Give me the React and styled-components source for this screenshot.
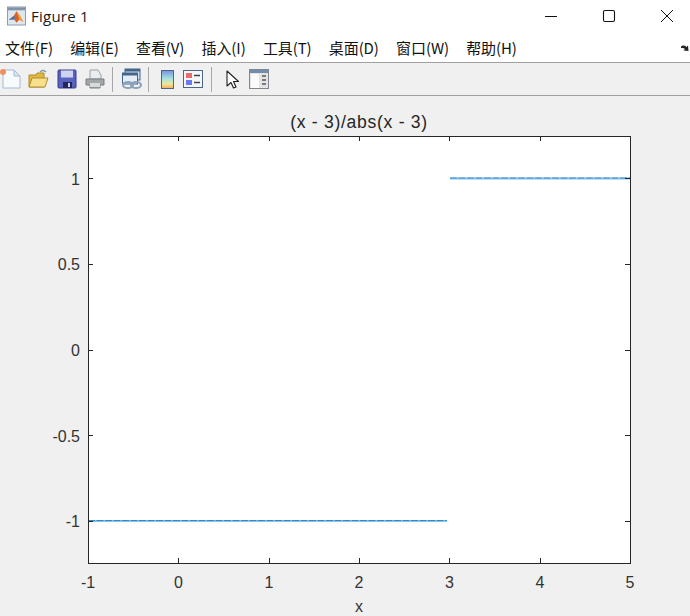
import React from "react"
import styled, { createGlobalStyle } from "styled-components"

const Global = createGlobalStyle`
  html, body { margin: 0; padding: 0; background: #f0f0f0; }
  body { font-family: "Open Sans", "Noto Sans CJK SC", sans-serif; }
`
const Win = styled.div`
  width: 690px;
  height: 616px;
  display: flex;
  flex-direction: column;
  overflow: hidden;
  background: #f0f0f0;
`
const TitleBar = styled.div`
  height: 32px;
  background: #fff;
  display: flex;
  align-items: center;
  padding-left: 7px;
  flex: none;
`
const TitleText = styled.span`
  font-size: 15px;
  color: #1a1a1a;
  margin-left: 5px;
  letter-spacing: 0.25px;
  flex: 1;
`
const WinBtns = styled.div`
  display: flex;
  align-items: center;
  gap: 44px;
  padding-right: 16px;
`
const MenuBar = styled.div`
  height: 30px;
  background: #fff;
  border-bottom: 1px solid #a0a0a0;
  display: flex;
  align-items: center;
  padding-left: 5px;
  gap: 17.3px;
  position: relative;
  flex: none;
`
const MenuItem = styled.span`
  font-family: "Noto Sans CJK SC", "Open Sans", sans-serif;
  font-size: 15px;
  color: #111;
  letter-spacing: -0.1px;
`
const Overflow = styled.svg`
  position: absolute;
  right: 0;
  top: 12px;
`
const ToolBar = styled.div`
  height: 32px;
  background: #f0f0f0;
  border-bottom: 1px solid #a0a0a0;
  display: flex;
  align-items: center;
  flex: none;
`
const Tool = styled.svg`
  width: 22px;
  height: 22px;
  margin-left: ${(p) => p.$ml ?? 6}px;
  flex: none;
`
const Sep = styled.div`
  width: 1px;
  height: 25px;
  background: #a8a8a8;
  margin-left: ${(p) => p.$ml ?? 6}px;
  flex: none;
`
const Figure = styled.div`
  flex: 1;
  background: #f0f0f0;
`
const Chart = styled.svg`
  display: block;
  width: 690px;
  height: 520px;
`
const Tick = styled.text`
  font-family: "Liberation Sans", Arial, sans-serif;
  font-size: 16px;
  fill: #333;
`
const PlotTitle = styled(Tick)`
  font-size: 17.6px;
  letter-spacing: 0.7px;
  fill: #262626;
`

const L = 88, R = 630, T = 40, B = 467
const xs = [
  ["-1", 88], ["0", 178.5], ["1", 269], ["2", 359], ["3", 449.5], ["4", 540], ["5", 630],
]
const ys = [
  ["1", 82.5], ["0.5", 168], ["0", 254], ["-0.5", 339.5], ["-1", 425],
]
const menus = ["文件(F)", "编辑(E)", "查看(V)", "插入(I)", "工具(T)", "桌面(D)", "窗口(W)", "帮助(H)"]

function PlotLine({ x1, x2, y }) {
  return (
    <>
      <line x1={x1} x2={x2} y1={y} y2={y} stroke="#8ac3ea" strokeWidth="2" />
      <line x1={x1} x2={x2} y1={y - 0.5} y2={y - 0.5} stroke="#2f8ccb" strokeWidth="1" strokeDasharray="7 1.5" />
    </>
  )
}

export default function App() {
  return (
    <Win>
      <Global />
      <TitleBar>
        <svg width="19" height="20" viewBox="0 0 20 20">
          <rect x="0.5" y="0.5" width="19" height="19" fill="#dfe6ee" stroke="#8b98a8" />
          <rect x="1" y="1" width="18" height="3" fill="#7f93aa" />
          <path d="M2 14 L7 10 L10 5 L13 9 L17 16 L13 14 L10 17 L7 13 Z" fill="#d9622b" />
          <path d="M2 14 L7 10 L9 12 L7 14 Z" fill="#3b78b5" />
          <path d="M10 5 L13 9 L17 16 L13 14 Z" fill="#f0a02c" />
        </svg>
        <TitleText>Figure 1</TitleText>
        <WinBtns>
          <svg width="14" height="14" viewBox="0 0 14 14"><path d="M1 7.5H13" stroke="#111" strokeWidth="1" /></svg>
          <svg width="14" height="14" viewBox="0 0 14 14"><rect x="1.5" y="1.5" width="11" height="11" rx="1.5" fill="none" stroke="#111" strokeWidth="1.1" /></svg>
          <svg width="14" height="14" viewBox="0 0 14 14"><path d="M1 1L13 13M13 1L1 13" stroke="#111" strokeWidth="1" /></svg>
        </WinBtns>
      </TitleBar>
      <MenuBar>
        {menus.map((m) => <MenuItem key={m}>{m}</MenuItem>)}
        <Overflow width="9" height="9" viewBox="0 0 9 9">
          <path d="M0 2.5 Q3 0.5 5.5 3 L7 1.5 L7.5 7 L2.5 6.5 L4 5 Q2.5 3.5 0 4Z" fill="#222" />
        </Overflow>
      </MenuBar>
      <ToolBar>
        <Tool $ml={0} viewBox="0 0 22 22">
          <path d="M3 2H14L20 8V20H3Z" fill="#f8fbfe" stroke="#a4bad2" />
          <path d="M14 2V8H20Z" fill="#d8e6f3" stroke="#a4bad2" />
          <circle cx="3" cy="4" r="3" fill="#f0905a" />
        </Tool>
        <Tool $ml={5} viewBox="0 0 22 22">
          <path d="M2 7H9L10 5H17V19H2Z" fill="#e2b93f" stroke="#b08c2e" />
          <path d="M2 19L5 10H21L18 19Z" fill="#f7e08c" stroke="#b08c2e" />
          <path d="M13 4Q16 1 19 4" fill="none" stroke="#7d97b0" strokeWidth="1.5" />
        </Tool>
        <Tool $ml={7} viewBox="0 0 22 22">
          <rect x="2" y="2" width="18" height="18" rx="1" fill="#5a62c0" stroke="#353a8c" />
          <rect x="5" y="2.5" width="12" height="7" fill="#cfd3f2" />
          <rect x="7" y="14" width="9" height="6" fill="#23265a" />
          <rect x="12" y="15" width="2" height="4" fill="#cfd3f2" />
        </Tool>
        <Tool $ml={6} viewBox="0 0 22 22">
          <path d="M6 2H14L17 7V11H6Z" fill="#e8edf2" stroke="#9a9fa5" />
          <path d="M2 11H20V17H16V20H6V17H2Z" fill="#a3a6a7" stroke="#7b7e80" />
          <rect x="6" y="15" width="10" height="4" fill="#d7d9da" />
        </Tool>
        <Sep $ml={6} />
        <Tool $ml={8} viewBox="0 0 22 22">
          <rect x="4" y="1" width="15" height="11" fill="#cfe0f0" stroke="#44648a" />
          <rect x="4" y="1" width="15" height="2.5" fill="#44648a" />
          <rect x="1.5" y="5" width="15" height="11" fill="#e5eef7" stroke="#44648a" />
          <rect x="1.5" y="5" width="15" height="2.5" fill="#44648a" />
          <ellipse cx="7" cy="17" rx="5" ry="3" fill="none" stroke="#8aa1b9" strokeWidth="2" />
          <ellipse cx="15" cy="17" rx="5" ry="3" fill="none" stroke="#8aa1b9" strokeWidth="2" />
        </Tool>
        <Sep $ml={5} />
        <Tool $ml={8} viewBox="0 0 22 22">
          <defs>
            <linearGradient id="cb" x1="0" y1="0" x2="0" y2="1">
              <stop offset="0" stopColor="#7b8fe0" />
              <stop offset="0.45" stopColor="#a6e2e2" />
              <stop offset="0.75" stopColor="#ece99a" />
              <stop offset="1" stopColor="#f2a65e" />
            </linearGradient>
          </defs>
          <rect x="4.5" y="2.5" width="12" height="18" fill="url(#cb)" stroke="#4a6689" />
        </Tool>
        <Tool $ml={3} viewBox="0 0 22 22">
          <rect x="1.5" y="2.5" width="19" height="17" fill="#f4f6f9" stroke="#4a6689" />
          <rect x="4" y="5" width="6" height="5" fill="#ee6b6b" />
          <rect x="4" y="12" width="6" height="5" fill="#6b78ee" />
          <path d="M12 7.5H18M12 14.5H18" stroke="#444" strokeWidth="1.5" />
        </Tool>
        <Sep $ml={7} />
        <Tool $ml={10} viewBox="0 0 22 22">
          <path d="M5 3V18L9 14.5L11.5 20L14 19L11.5 13.5H16.5Z" fill="#fff" stroke="#222" strokeWidth="1.1" strokeLinejoin="round" />
        </Tool>
        <Tool $ml={4} viewBox="0 0 22 22">
          <rect x="1.5" y="1.5" width="19" height="19" fill="#e4e4e4" stroke="#80868c" />
          <rect x="2" y="2" width="18" height="3" fill="#6f8fae" />
          <rect x="3" y="6" width="8" height="14" fill="#fbfbfb" />
          <path d="M14 8H18M14 12H18M14 16H18" stroke="#555" strokeWidth="1.5" />
        </Tool>
      </ToolBar>
      <Figure>
        <Chart viewBox="0 0 690 520">
          <rect x={L} y={T} width={R - L} height={B - T} fill="#fff" />
          <PlotLine x1={450} x2={630} y={82.5} />
          <PlotLine x1={88} x2={447} y={425} />
          <rect x={L} y={T} width={R - L} height={B - T} fill="none" stroke="#262626" strokeWidth="1" shapeRendering="crispEdges" />
          {xs.map(([t, x]) => (
            <g key={t}>
              <line x1={x} x2={x} y1={B} y2={B - 5} stroke="#262626" shapeRendering="crispEdges" />
              <line x1={x} x2={x} y1={T} y2={T + 5} stroke="#262626" shapeRendering="crispEdges" />
              <Tick x={x} y={492} textAnchor="middle">{t}</Tick>
            </g>
          ))}
          {ys.map(([t, y]) => (
            <g key={t}>
              <line x1={L} x2={L + 5} y1={y} y2={y} stroke="#262626" shapeRendering="crispEdges" />
              <line x1={R} x2={R - 5} y1={y} y2={y} stroke="#262626" shapeRendering="crispEdges" />
              <Tick x={80} y={y + 6} textAnchor="end">{t}</Tick>
            </g>
          ))}
          <PlotTitle x={359} y={32} textAnchor="middle">(x - 3)/abs(x - 3)</PlotTitle>
          <Tick x={359} y={516} textAnchor="middle">x</Tick>
        </Chart>
      </Figure>
    </Win>
  )
}
